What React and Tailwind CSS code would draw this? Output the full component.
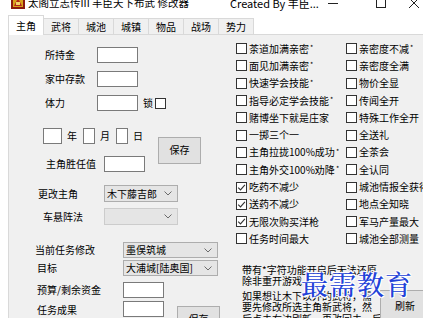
const TABS = ['主角', '武将', '城池', '城镇', '物品', '战场', '势力']

const LEFT_OPTIONS = [
  { text: '茶道加满亲密', star: true },
  { text: '面见加满亲密', star: true },
  { text: '快速学会技能', star: true },
  { text: '指导必定学会技能', star: true },
  { text: '赌博坐下就是庄家' },
  { text: '一掷三个一' },
  { text: '主角拉拢100%成功', star: true },
  { text: '主角外交100%劝降', star: true },
  { text: '吃药不减少', checked: true },
  { text: '送药不减少', checked: true },
  { text: '无限次购买洋枪', checked: true },
  { text: '任务时间最大' },
]

const RIGHT_OPTIONS = [
  { text: '亲密度不减', star: true },
  { text: '亲密度全满' },
  { text: '物价全显' },
  { text: '传闻全开' },
  { text: '特殊工作全开' },
  { text: '全送礼' },
  { text: '全茶会' },
  { text: '全认同' },
  { text: '城池情报全获得' },
  { text: '地点全知晓' },
  { text: '军马产量最大' },
  { text: '城池全部测量' },
]

function Box({ className = '' }) {
  return <span className={`block h-[16px] shrink-0 border border-[#7a7a7a] bg-white ${className}`} />
}

function Button({ label, className = '' }) {
  return (
    <button
      type="button"
      className={`flex shrink-0 items-center justify-center border border-[#adadad] bg-[#e1e1e1] leading-none ${className}`}
    >
      {label}
    </button>
  )
}

function Chevron() {
  return (
    <svg width="8" height="5" viewBox="0 0 8 5" className="shrink-0">
      <path d="M0.5 0.5 L4 4 L7.5 0.5" fill="none" stroke="#6b6b6b" strokeWidth="1" />
    </svg>
  )
}

function Combo({ value, disabled, className = '' }) {
  return (
    <div
      className={`flex shrink-0 items-center justify-between bg-[#e5e5e5] pl-[2px] pr-[5px] leading-none ${
        disabled ? 'border border-[#cccccc]' : 'border border-[#adadad]'
      } ${className}`}
    >
      <span className="whitespace-nowrap">{value}</span>
      <Chevron />
    </div>
  )
}

function CheckBox({ checked }) {
  return (
    <span className="flex h-[11px] w-[11px] shrink-0 items-center justify-center border border-[#333333] bg-white">
      {checked ? (
        <svg width="9" height="9" viewBox="0 0 9 9">
          <path d="M1.2 4.6 L3.5 6.9 L7.9 1.8" fill="none" stroke="#333333" strokeWidth="1.1" />
        </svg>
      ) : null}
    </span>
  )
}

function Option({ text, star, checked }) {
  return (
    <div className="flex h-[17.3px] items-center whitespace-nowrap">
      <CheckBox checked={checked} />
      <span className="ml-[2px] leading-none">{text}</span>
      {star ? <span className="ml-[1px] self-start pt-[4px] text-[7px] leading-none">*</span> : null}
    </div>
  )
}

function Row({ label, labelClass, children, className = '' }) {
  return (
    <div className={`flex items-center ${className}`}>
      <span className={`shrink-0 whitespace-nowrap leading-none ${labelClass}`}>{label}</span>
      {children}
    </div>
  )
}

function TitleBar() {
  return (
    <div className="h-[16px] overflow-hidden bg-white">
      <div className="-mt-[10px] flex h-[26px] items-center text-[10.5px] leading-none">
        <svg width="14" height="14" viewBox="0 0 14 14" className="-mt-[2px] ml-[11px] shrink-0">
          <rect x="0" y="0" width="14" height="14" fill="#8b1a10" />
          <rect x="2" y="2" width="10" height="10" fill="#d8a21c" />
          <path d="M3 11 L7 3 L11 11 Z" fill="#b3261b" />
          <rect x="5" y="7" width="4" height="3" fill="#f3d36b" />
        </svg>
        <span className="ml-[3px] w-[202px] shrink-0 whitespace-nowrap">太阁立志传III 丰臣天下布武 修改器</span>
        <span className="w-[98px] shrink-0 whitespace-nowrap text-[11px]">Created By 丰臣...</span>
        <svg width="10" height="10" viewBox="0 0 10 10" className="shrink-0">
          <path d="M0 5.5 H10" stroke="#222" strokeWidth="1" />
        </svg>
        <svg width="10" height="10" viewBox="0 0 10 10" className="ml-[38px] shrink-0">
          <rect x="0.5" y="0.5" width="9" height="9" fill="none" stroke="#222" strokeWidth="1" />
        </svg>
        <svg width="12" height="12" viewBox="0 0 12 12" className="ml-[22px] shrink-0">
          <path d="M1 1 L11 11 M11 1 L1 11" stroke="#222" strokeWidth="1" />
        </svg>
      </div>
    </div>
  )
}

function TabStrip() {
  return (
    <div className="flex h-[18px] items-end bg-white pl-[8px]">
      {TABS.map((tab, i) =>
        i === 0 ? (
          <div
            key={tab}
            className="relative z-10 -mb-px flex h-[20px] w-[36px] items-center justify-center border border-b-0 border-[#d9d9d9] bg-white leading-none"
          >
            {tab}
          </div>
        ) : (
          <div
            key={tab}
            className="flex h-[16px] w-[35px] items-center justify-center border border-l-0 border-b-0 border-[#d9d9d9] bg-[#f0f0f0] leading-none"
          >
            {tab}
          </div>
        )
      )}
    </div>
  )
}

function LeftColumn() {
  return (
    <div className="flex w-[227px] shrink-0 flex-col">
      <Row label="所持金" labelClass="w-[52px]" className="mt-[12px] pl-[36px]">
        <Box className="w-[41px]" />
      </Row>
      <Row label="家中存款" labelClass="w-[52px]" className="mt-[8px] pl-[36px]">
        <Box className="w-[41px]" />
      </Row>
      <Row label="体力" labelClass="w-[52px]" className="mt-[8px] pl-[36px]">
        <Box className="w-[41px]" />
        <span className="ml-[5px] leading-none">锁</span>
        <span className="ml-[2px]">
          <CheckBox />
        </span>
      </Row>

      <div className="mt-[17px] flex items-center pl-[34px]">
        <div className="flex w-[115px] shrink-0 flex-col gap-[12px]">
          <div className="flex items-center leading-none">
            <Box className="w-[19px]" />
            <span className="ml-[5px]">年</span>
            <Box className="ml-[6px] w-[12px]" />
            <span className="ml-[5px]">月</span>
            <Box className="ml-[6px] w-[12px]" />
            <span className="ml-[5px]">日</span>
          </div>
          <Row label="主角胜任值" labelClass="w-[58px]" className="pl-[3px]">
            <Box className="w-[41px]" />
          </Row>
        </div>
        <Button label="保存" className="h-[27px] w-[43px]" />
      </div>

      <Row label="更改主角" labelClass="w-[66px]" className="mt-[13px] pl-[29px]">
        <Combo value="木下藤吉郎" className="h-[17px] w-[74px]" />
      </Row>
      <Row label="车悬阵法" labelClass="w-[61px]" className="mt-[6px] pl-[34px]">
        <Combo value="" disabled className="h-[17px] w-[74px]" />
      </Row>

      <Row label="当前任务修改" labelClass="w-[88px]" className="mt-[17px] pl-[26px]">
        <Combo value="墨俣筑城" className="h-[16px] w-[95px]" />
      </Row>
      <Row label="目标" labelClass="w-[86px]" className="mt-[2px] pl-[28px]">
        <Combo value="大浦城[陆奥国]" className="h-[16px] w-[95px]" />
      </Row>
      <Row label="预算/剩余资金" labelClass="w-[86px]" className="mt-[6px] pl-[28px]">
        <Box className="w-[41px]" />
      </Row>
      <div className="mt-[3px] flex items-start pl-[28px]">
        <span className="w-[86px] shrink-0 pt-[4px] leading-none">任务成果</span>
        <Box className="w-[41px]" />
        <Button label="保存" className="ml-[13px] mt-[5px] h-[27px] w-[43px] items-start pt-[7px]" />
      </div>
    </div>
  )
}

function RightColumn() {
  return (
    <div className="flex min-w-0 flex-1 flex-col">
      <div className="flex pt-[5px]">
        <div className="w-[110px] shrink-0">
          {LEFT_OPTIONS.map((opt) => (
            <Option key={opt.text} {...opt} />
          ))}
        </div>
        <div className="shrink-0">
          {RIGHT_OPTIONS.map((opt) => (
            <Option key={opt.text} {...opt} />
          ))}
        </div>
      </div>

      <div className="mt-[16px] flex">
        <div className="ml-[6px] w-[138px] shrink-0 whitespace-nowrap leading-[11.6px]">
          <div>带有*字符功能开启后无法还原</div>
          <div>除非重开游戏</div>
          <div className="mt-[3px]">如果想让木下以外的武将，需</div>
          <div>要先修改所选主角新武将，然</div>
          <div>后点击右边刷新，再改回去，后</div>
        </div>
        <Button label="刷新" className="mt-[26px] h-[32px] w-[50px]" />
      </div>
    </div>
  )
}

export default function App() {
  return (
    <div className="relative h-[318px] w-[423px] overflow-hidden bg-white text-[10px] text-black [font-family:'Noto_Sans_CJK_SC','Noto_Sans',sans-serif]">
      <TitleBar />
      <TabStrip />
      <div className="ml-[8px] flex h-[284px] border-l border-t border-[#d9d9d9] bg-[#f0f0f0]">
        <LeftColumn />
        <RightColumn />
      </div>
      <div className="pointer-events-none absolute left-[301px] top-[270px] whitespace-nowrap text-[27px] font-medium leading-none tracking-[1px] text-[#2342d8] [font-family:'Noto_Serif_CJK_SC','Noto_Sans_CJK_SC',serif] [text-shadow:1px_1px_0_#fff,-1px_-1px_0_#fff,1px_-1px_0_#fff,-1px_1px_0_#fff]">
        最需教育
      </div>
    </div>
  )
}
